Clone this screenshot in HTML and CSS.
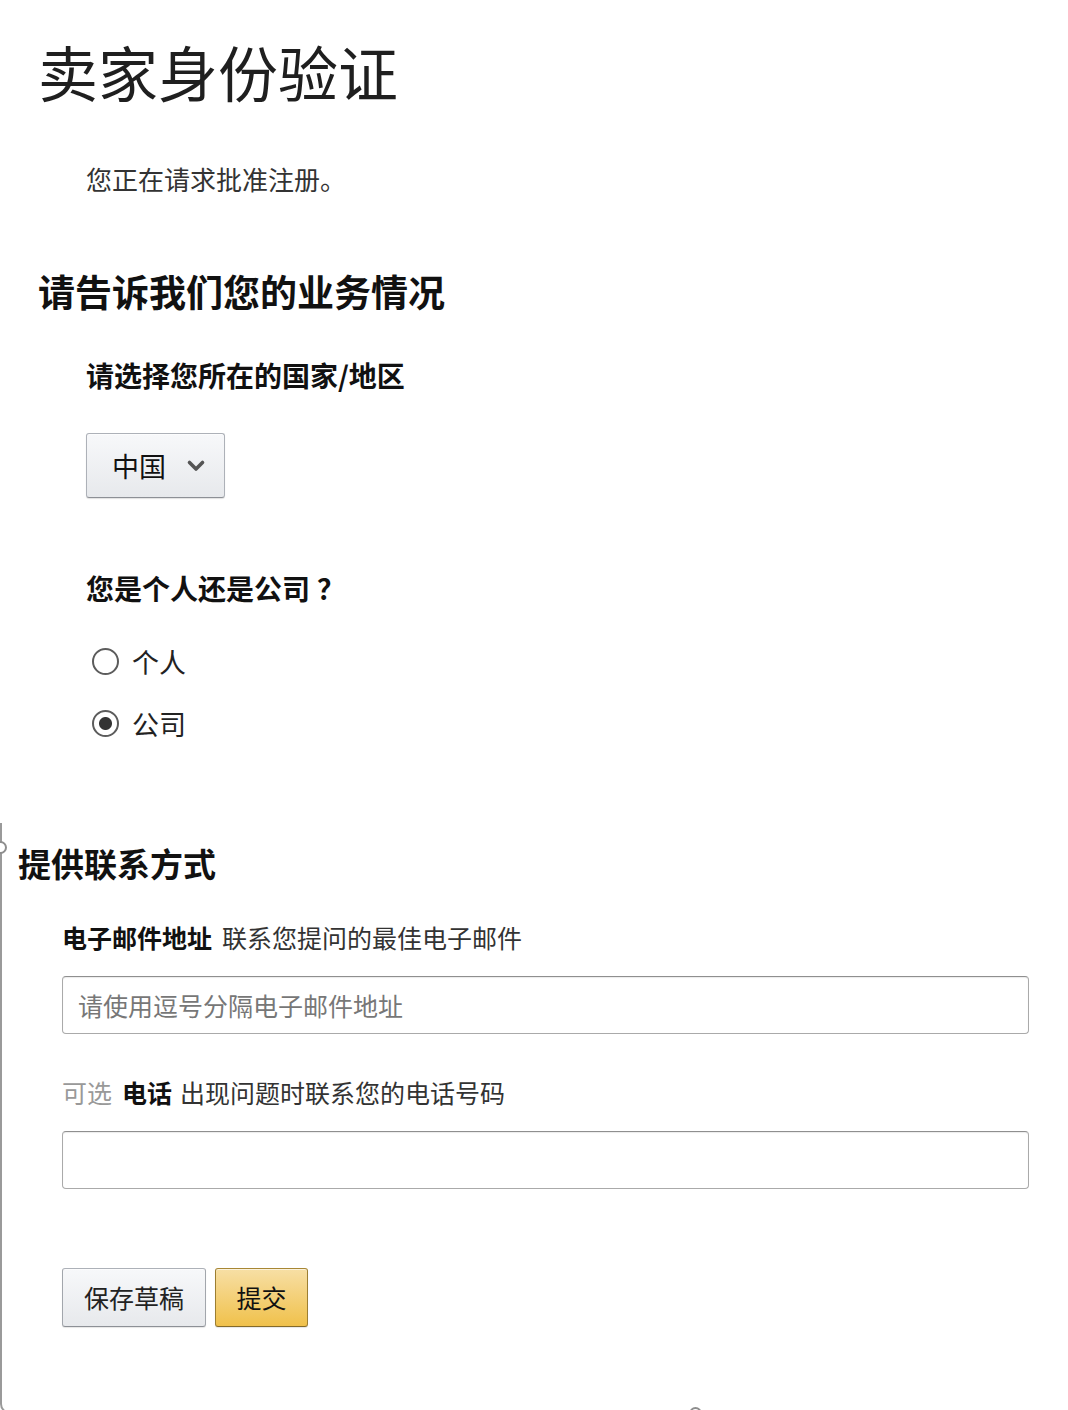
FILE: index.html
```html
<!DOCTYPE html>
<html lang="zh-CN">
<head>
<meta charset="utf-8">
<title>卖家身份验证</title>
<link rel="stylesheet" href="styles.css">
</head>
<body>
<main class="page">
  <header class="intro">
    <h1 class="title">卖家身份验证</h1>
    <p class="lead">您正在请求批准注册。</p>
  </header>

  <section class="business">
    <h2 class="section-title">请告诉我们您的业务情况</h2>
    <div class="field">
      <div class="field-label">请选择您所在的国家/地区</div>
      <button class="select" type="button">
        <span class="select-text">中国</span>
        <svg class="chevron" width="20" height="14" viewBox="0 0 20 14" aria-hidden="true">
          <path d="M3.5 3.5 L10 10 L16.5 3.5" fill="none" stroke="#555" stroke-width="3.6" stroke-linecap="round" stroke-linejoin="round"/>
        </svg>
      </button>
    </div>
    <div class="field">
      <div class="field-label question">您是个人还是公司<span class="qmark">？</span></div>
      <label class="radio-row first"><input class="radio" type="radio" name="type"><span>个人</span></label>
      <label class="radio-row"><input class="radio" type="radio" name="type" checked><span>公司</span></label>
    </div>
  </section>

  <section class="contact">
    <span class="handle handle-left"></span>
    <span class="handle handle-bottom"></span>
    <h2 class="contact-title">提供联系方式</h2>
    <div class="contact-body">
      <div class="input-label"><b class="strong">电子邮件地址</b><span class="hint">联系您提问的最佳电子邮件</span></div>
      <input class="text-input" type="text" placeholder="请使用逗号分隔电子邮件地址">
      <div class="input-label second"><span class="optional">可选</span><b class="strong">电话</b><span class="hint">出现问题时联系您的电话号码</span></div>
      <input class="text-input" type="text">
      <div class="actions">
        <button class="btn btn-secondary" type="button">保存草稿</button>
        <button class="btn btn-primary" type="button">提交</button>
      </div>
    </div>
  </section>
</main>
</body>
</html>
```
FILE: styles.css
```css
* { box-sizing: border-box; }

html, body {
  margin: 0;
  padding: 0;
  background: #fff;
}

body {
  font-family: "Noto Sans CJK SC", "Microsoft YaHei", sans-serif;
  color: #111;
  overflow: hidden;
}

.page {
  padding-top: 36px;
}

.intro {
  padding-left: 38px;
}

.title {
  margin: 0;
  font-size: 60px;
  line-height: 70px;
  font-weight: 400;
  color: #1f1f1f;
}

.lead {
  margin: 58px 0 0 48px;
  font-size: 26px;
  line-height: 30px;
  color: #333;
}

.business {
  padding-left: 38px;
}

.section-title {
  margin: 75px 0 0 0;
  font-size: 37px;
  line-height: 44px;
  font-weight: 700;
  color: #111;
}

.field {
  padding-left: 48px;
}

.field-label {
  margin-top: 46px;
  font-size: 28px;
  line-height: 32px;
  font-weight: 700;
  color: #111;
}

.field-label.question {
  margin-top: 74px;
}

.qmark {
  display: inline-block;
  padding-left: 7px;
}

.select {
  margin-top: 42px;
  width: 139px;
  height: 65px;
  display: flex;
  align-items: center;
  padding: 0 0 0 25px;
  border: 1px solid #adb1b8;
  border-bottom-color: #8d9096;
  border-radius: 3px;
  background: linear-gradient(#f7f8fa, #e7e9ec);
  box-shadow: inset 0 1px 0 rgba(255,255,255,.6), 0 1px 1px rgba(0,0,0,.12);
  font-family: inherit;
  cursor: pointer;
}

.select-text {
  font-size: 27px;
  line-height: 32px;
  color: #111;
}

.chevron {
  margin-left: 20px;
  margin-top: 1px;
}

.radio-row {
  display: flex;
  align-items: center;
  height: 40px;
  margin-top: 22px;
  font-size: 27px;
  color: #222;
}

.radio-row.first {
  margin-top: 37px;
}

.radio {
  appearance: none;
  -webkit-appearance: none;
  width: 27px;
  height: 27px;
  margin: 0 13px 0 6px;
  border: 2px solid #5c5c5c;
  border-radius: 50%;
  background: #fff;
}

.radio:checked {
  background: radial-gradient(circle, #333 0 6px, #fff 7px);
}

.contact {
  position: relative;
  margin-top: 80px;
  padding: 20px 0 85px 16px;
  border-left: 2px solid #9a9a9a;
  border-bottom: 2px solid #9a9a9a;
  border-bottom-left-radius: 10px;
}

.handle {
  position: absolute;
  width: 13px;
  height: 13px;
  border: 2px solid #8e8e8e;
  border-radius: 50%;
  background: #fff;
}

.handle-left {
  left: -8px;
  top: 18px;
}

.handle-bottom {
  left: 687px;
  bottom: -8px;
}

.contact-title {
  margin: 0;
  font-size: 33px;
  line-height: 40px;
  font-weight: 700;
  color: #111;
}

.contact-body {
  padding-left: 44px;
}

.input-label {
  margin-top: 39px;
  font-size: 25px;
  line-height: 30px;
  color: #333;
  white-space: nowrap;
}

.input-label.second {
  margin-top: 43px;
}

.strong {
  font-weight: 700;
  color: #111;
}

.hint {
  margin-left: 10px;
}

.optional {
  color: #999;
  margin-right: 10px;
}

.second .hint {
  margin-left: 8px;
}

.text-input {
  display: block;
  margin-top: 24px;
  width: 967px;
  height: 58px;
  padding: 0 15px;
  border: 1px solid #aaa;
  border-top-color: #8f8f8f;
  border-radius: 4px;
  box-shadow: inset 0 1px 1px rgba(0,0,0,.08);
  font-family: inherit;
  font-size: 25px;
  color: #111;
  background: #fff;
  outline: none;
}

.text-input::placeholder {
  color: #777;
}

.actions {
  display: flex;
  gap: 9px;
  margin-top: 79px;
}

.btn {
  height: 59px;
  border: 1px solid;
  border-radius: 3px;
  font-family: inherit;
  font-size: 25px;
  line-height: 30px;
  color: #111;
  cursor: pointer;
  box-shadow: inset 0 1px 0 rgba(255,255,255,.6), 0 1px 1px rgba(0,0,0,.1);
}

.btn-secondary {
  width: 144px;
  padding: 0 0 2px;
  border-color: #adb1b8 #a2a6ac #8d9096;
  background: linear-gradient(#f7f8fa, #e7e9ec);
  color: #222;
}

.btn-primary {
  width: 93px;
  padding: 0 0 2px;
  border-color: #a88734 #9c7e31 #846a29;
  background: linear-gradient(#f7dfa5, #f0c14b);
}
```
